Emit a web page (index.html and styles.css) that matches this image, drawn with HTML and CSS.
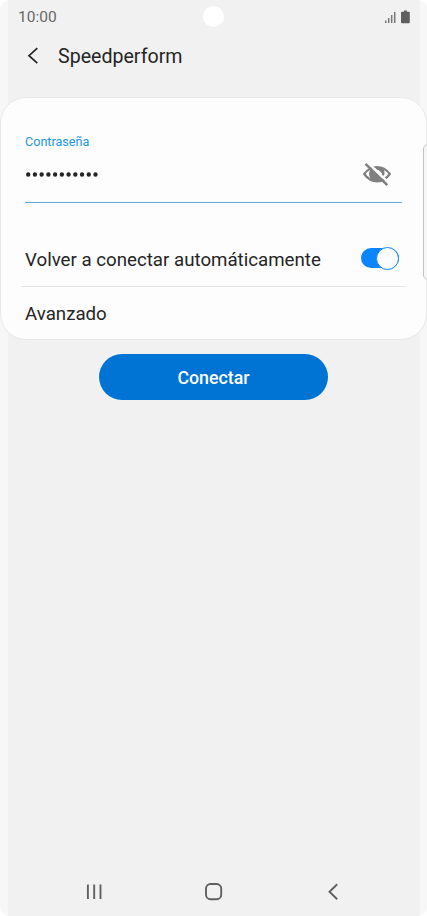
FILE: index.html
```html
<!DOCTYPE html>
<html lang="es">
<head>
    <meta charset="UTF-8">
    <meta name="viewport" content="width=device-width, initial-scale=1.0">
    <title>Speedperform</title>
    <link rel="stylesheet" href="styles.css">
</head>
<body>
    <div class="phone">
        <div class="status-bar">
            <span class="time">10:00</span>
            <span class="camera"></span>
            <svg class="status-icons" width="28" height="14" viewBox="0 0 28 14">
                <path d="M1.7 10.5v2.5M4.7 8v5M7.7 5v8M10.7 2v11" fill="none" stroke="#777" stroke-width="1.5"/>
                <path d="M19.9 0.5h3v1.2h2.1q.8 0 .8.8v10q0 .8-.8.8h-7.2q-.8 0-.8-.8v-10q0-.8.8-.8h2.1z" fill="#5f5f5f"/>
            </svg>
        </div>

        <div class="header">
            <svg width="12" height="18" viewBox="0 0 12 18">
                <path d="M10.3 1.2L2 8.7l8.3 7.5" fill="none" stroke="#252525" stroke-width="1.7"/>
            </svg>
            <h1>Speedperform</h1>
        </div>

        <div class="card">
            <div class="password">
                <label>Contraseña</label>
                <div class="password-field">
                    <svg class="dots" width="76" height="8" viewBox="0 0 76 8">
                        <path d="M3.2 4.5h68" fill="none" stroke="#252525" stroke-width="4.4" stroke-linecap="round" stroke-dasharray="0 6.73"/>
                    </svg>
                    <svg class="eye" width="30" height="26" viewBox="0 0 30 26">
                        <path d="M2.2 13Q7.5 6 15 6T27.8 13Q22.5 20.3 15 20.3T2.2 13z" fill="none" stroke="#808080" stroke-width="2.2"/>
                        <path d="M9 7.7A8 8 0 0 0 12.5 20.5H19.5z" fill="#808080"/>
                        <path d="M13 6h6.5q3.5 3 3 7l-2.2 3.5q.2-5.5-6.3-8.5z" fill="#808080"/>
                        <path d="M15.5 9.5q3 .5 4.2 3.5" fill="none" stroke="#fdfdfd" stroke-width="1"/>
                        <path d="M5.8 1.7L27.5 22.5" stroke="#fdfdfd" stroke-width="2.3"/>
                        <path d="M3.5 2.8L25.3 24.2" stroke="#808080" stroke-width="2.5"/>
                    </svg>
                </div>
            </div>
            <div class="row reconnect">
                <span class="row-label">Volver a conectar automáticamente</span>
                <span class="switch"><span class="knob"></span></span>
            </div>
            <div class="row">
                <span>Avanzado</span>
            </div>
        </div>

        <button class="connect">Conectar</button>

        <div class="nav-bar">
            <svg width="18" height="18" viewBox="0 0 18 18">
                <path d="M1.9 1.5v14.5M8.2 1.5v14.5M14.5 1.5v14.5" fill="none" stroke="#606060" stroke-width="1.9"/>
            </svg>
            <svg width="18" height="18" viewBox="0 0 18 18">
                <rect x="1" y="1" width="15.2" height="15.2" rx="4.5" fill="none" stroke="#606060" stroke-width="1.9"/>
            </svg>
            <svg width="18" height="18" viewBox="0 0 18 18">
                <path d="M13.2 1.2L5.5 8.8l7.7 7.5" fill="none" stroke="#606060" stroke-width="1.9"/>
            </svg>
        </div>

        <!-- edge panel handle -->
        <span class="edge-handle"></span>
    </div>
</body>
</html>
```

FILE: styles.css
```css
body {
    margin: 0;
    background-color: #fff;
    color: #252525;
    font-family: Roboto, sans-serif;
}

* {
    box-sizing: border-box;
}

svg {
    display: block;
}

.phone {
    position: relative;
    display: flex;
    flex-direction: column;
    height: 916px;
    overflow: hidden;
    border-radius: 9px;
    background: linear-gradient(to right, #f7f7f7 8px, #f1f1f1 8px, #f1f1f1 420px, #f7f7f7 420px);
}

.status-bar {
    display: grid;
    grid-template-columns: 1fr 21px 1fr;
    align-items: center;
    height: 33px;
    padding: 0 15px;
}

.time {
    padding-left: 3px;
    font-size: 15.5px;
    color: #686868;
}

.camera {
    width: 21px;
    height: 21px;
    border-radius: 50%;
    background-color: #fff;
}

.status-icons {
    justify-self: end;
}

.header {
    display: flex;
    align-items: center;
    gap: 19px;
    height: 63px;
    margin-bottom: 1px;
    padding: 0 27px 17px;
}

.header h1 {
    margin: 0;
    font-size: 19.6px;
    font-weight: 400;
}

.card {
    height: 243px;
    padding: 35px 20px 0;
    border: 1px solid #e8e8e8;
    border-radius: 26px;
    background-color: #fdfdfd;
}

.password {
    height: 70px;
    margin: 0 4px;
    border-bottom: 1px solid #62a9d6;
}

.password label {
    display: block;
    font-size: 12.6px;
    line-height: 18px;
    color: #2196e3;
}

.password-field {
    display: flex;
    align-items: center;
    justify-content: space-between;
    height: 46px;
    padding-right: 10px;
}

.row {
    display: flex;
    align-items: center;
    justify-content: space-between;
    height: 53px;
    padding: 0 4px;
    font-size: 18.7px;
}

.reconnect {
    height: 84px;
    padding-top: 27px;
    border-bottom: 1px solid #e6e6e6;
}

.row-label {
    padding-top: 3px;
}

.switch {
    display: flex;
    align-items: center;
    justify-content: flex-end;
    width: 38px;
    height: 20px;
    margin-right: 3px;
    border-radius: 10px;
    background-color: #0a84ff;
}

.knob {
    width: 23px;
    height: 23px;
    flex-shrink: 0;
    border: 1px solid #0a84ff;
    border-radius: 50%;
    background-color: #fdfdfd;
}

.connect {
    align-self: center;
    width: 229px;
    height: 46px;
    margin-top: 14px;
    border: none;
    border-radius: 23px;
    background-color: #0074d4;
    color: #fff;
    font-family: inherit;
    font-size: 17.8px;
    font-weight: 500;
}

.nav-bar {
    display: flex;
    justify-content: space-between;
    margin-top: auto;
    padding: 0 85px 15px 86px;
}

.edge-handle {
    position: absolute;
    top: 144px;
    right: -6px;
    width: 10px;
    height: 136px;
    border: 1px solid #c4c4c4;
    border-radius: 5px;
    background-color: #f7f7f7;
}
```
